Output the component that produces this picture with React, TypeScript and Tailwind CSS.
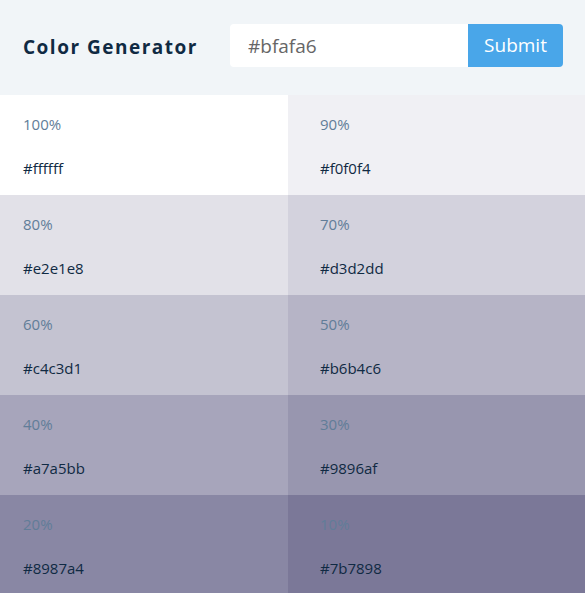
const colors = [
  { weight: 100, hex: "#ffffff" },
  { weight: 90, hex: "#f0f0f4" },
  { weight: 80, hex: "#e2e1e8" },
  { weight: 70, hex: "#d3d2dd" },
  { weight: 60, hex: "#c4c3d1" },
  { weight: 50, hex: "#b6b4c6" },
  { weight: 40, hex: "#a7a5bb" },
  { weight: 30, hex: "#9896af" },
  { weight: 20, hex: "#8987a4" },
  { weight: 10, hex: "#7b7898" },
];

export default function App() {
  return (
    <div className="min-h-[593px] w-[585px] bg-white font-['Open_Sans','Noto_Sans',sans-serif]">
      <section className="flex h-[95px] items-center bg-[#f1f5f8] pl-[23px]">
        <h3 className="w-[207px] text-[19px] font-bold tracking-[1.5px] text-[#102a43]">
          Color Generator
        </h3>
        <form className="-mt-[4px] flex" onSubmit={(e) => e.preventDefault()}>
          <input
            type="text"
            defaultValue="#bfafa6"
            className="h-[43px] w-[238px] rounded-l-[4px] bg-white px-[18px] text-[19px] text-[#666] outline-none"
          />
          <button
            type="submit"
            className="h-[43px] w-[95px] rounded-r-[4px] bg-[#49a6e9] text-[19px] text-white"
          >
            Submit
          </button>
        </form>
      </section>

      <section className="grid grid-cols-[288px_1fr]">
        {colors.map((color, index) => (
          <article
            key={color.weight}
            className={
              index % 2 === 0
                ? "h-[100px] pl-[23px] pt-[17px]"
                : "h-[100px] pl-[32px] pt-[17px]"
            }
            style={{ backgroundColor: color.hex }}
          >
            <p className="text-[15px] leading-6 text-[#617d98]">{color.weight}%</p>
            <p className="mt-[20px] text-[15px] leading-6 text-[#102a43]">{color.hex}</p>
          </article>
        ))}
      </section>
    </div>
  );
}
